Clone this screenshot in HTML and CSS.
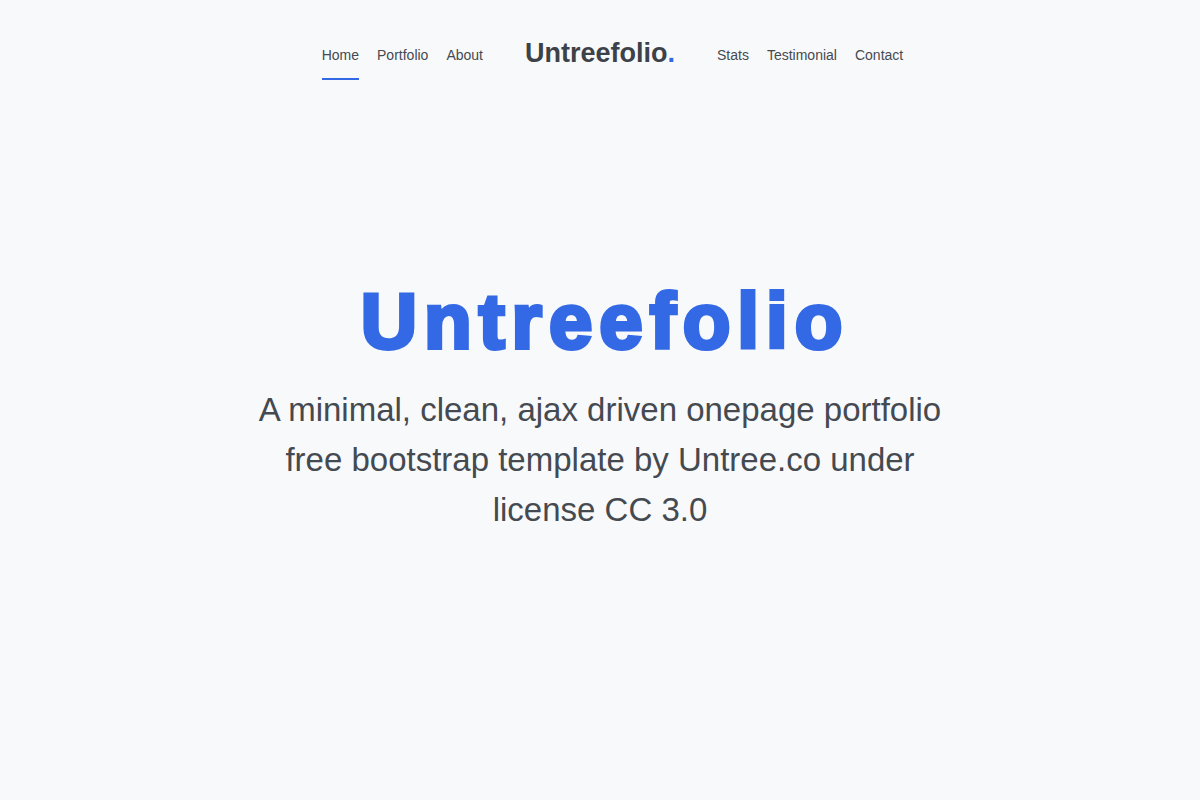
FILE: index.html
```html
<!DOCTYPE html>
<html lang="en">
<head>
<meta charset="utf-8">
<title>Untreefolio</title>
<link rel="stylesheet" href="styles.css">
</head>
<body>
<header class="site-nav">
  <ul class="menu menu-left">
    <li><a class="active" href="#">Home</a></li>
    <li><a href="#">Portfolio</a></li>
    <li><a href="#">About</a></li>
  </ul>
  <a class="logo" href="#">Untreefolio<span class="dot">.</span></a>
  <ul class="menu menu-right">
    <li><a href="#">Stats</a></li>
    <li><a href="#">Testimonial</a></li>
    <li><a href="#">Contact</a></li>
  </ul>
</header>
<main class="hero">
  <h1 class="hero-title">Untreefolio</h1>
  <p class="hero-lead">A minimal, clean, ajax driven onepage portfolio free bootstrap template by Untree.co under license CC 3.0</p>
</main>
</body>
</html>
```
FILE: styles.css
```css
html, body {
  margin: 0;
  padding: 0;
}
body {
  background: #f8f9fb;
  font-family: "Liberation Sans", Arial, sans-serif;
  color: #454a51;
  width: 1200px;
  height: 800px;
  overflow: hidden;
}
.site-nav {
  display: grid;
  grid-template-columns: 1fr auto 1fr;
  align-items: start;
  padding-top: 36px;
}
.menu {
  list-style: none;
  margin: 0;
  padding: 0;
  display: flex;
  gap: 18px;
}
.menu-left {
  justify-self: end;
  margin-right: 42px;
}
.menu-right {
  justify-self: start;
  margin-left: 42px;
}
.menu a {
  display: block;
  font-size: 14px;
  line-height: 20px;
  padding: 9px 0 13px;
  color: #454a51;
  text-decoration: none;
  border-bottom: 2px solid transparent;
}
.menu a.active {
  border-bottom-color: #3469e6;
}
.logo {
  font-size: 27px;
  font-weight: bold;
  line-height: 32px;
  padding-top: 1px;
  color: #3d4249;
  text-decoration: none;
}
.logo .dot { color: #3469e6; }
.hero {
  display: flex;
  flex-direction: column;
  align-items: center;
  padding-top: 191px;
}
.hero-title {
  margin: 0 0 0 10px;
  font-size: 78px;
  line-height: 100px;
  font-weight: bold;
  color: #3469e6;
  letter-spacing: 7px;
  -webkit-text-stroke: 4px #3469e6;
}
.hero-lead {
  margin: 14px 0 0;
  width: 700px;
  text-align: center;
  font-size: 33px;
  line-height: 50px;
  color: #454a51;
}
```
